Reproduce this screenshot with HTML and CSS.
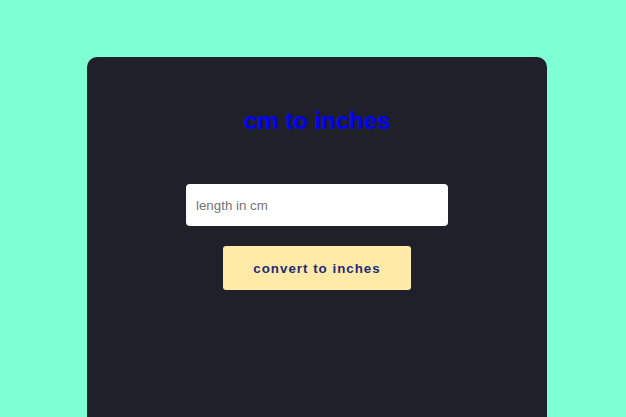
FILE: index.html
```html
<!DOCTYPE html>
<html lang="en">
<head>
<meta charset="utf-8">
<title>cm to inches</title>
<link rel="stylesheet" href="styles.css">
</head>
<body>
<div class="wrap">
  <main class="card">
    <h2 class="title">cm to inches</h2>
    <input class="field" type="text" placeholder="length in cm">
    <button class="btn" type="button">convert to inches</button>
  </main>
</div>
</body>
</html>
```
FILE: styles.css
```css
html, body {
  margin: 0;
  padding: 0;
  background: #7fffd4;
  font-family: "Liberation Sans", Arial, sans-serif;
}
body {
  padding-top: 57px;
  overflow: hidden;
  height: 417px;
  box-sizing: border-box;
}
.wrap {
  display: flex;
  justify-content: center;
  padding-left: 8px;
}
.card {
  width: 460px;
  height: 360px;
  background: #20202a;
  border-radius: 10px 10px 0 0;
  padding-top: 50px;
  box-sizing: border-box;
  display: flex;
  flex-direction: column;
  align-items: center;
}
.title {
  margin: 0;
  font-size: 24px;
  font-weight: bold;
  color: #0000ff;
}
.field {
  margin-top: 49px;
  width: 262px;
  height: 42px;
  box-sizing: border-box;
  border: none;
  border-radius: 4px;
  background: #ffffff;
  padding: 0 10px;
  font-family: "Liberation Sans", Arial, sans-serif;
  font-size: 13.333px;
  color: #333;
  outline: none;
}
.field::placeholder {
  color: #757575;
}
.btn {
  margin-top: 20px;
  width: 188px;
  height: 44px;
  border: none;
  border-radius: 3px;
  background: #ffeaa7;
  color: #1e2a78;
  font-family: "Liberation Sans", Arial, sans-serif;
  font-size: 13.333px;
  font-weight: bold;
  letter-spacing: 1px;
  padding: 0;
}
```
